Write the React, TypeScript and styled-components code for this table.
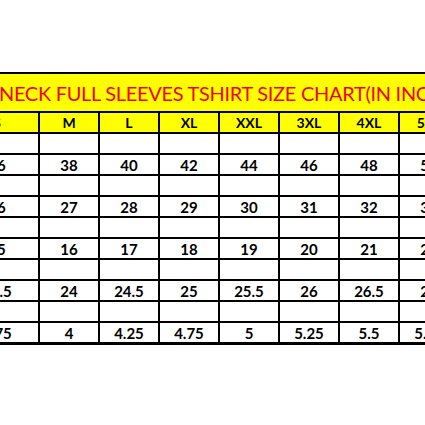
import React from 'react';
import styled, { createGlobalStyle } from 'styled-components';

const GlobalStyle = createGlobalStyle`
  html, body {
    margin: 0;
    padding: 0;
    background: #ffffff;
  }
  body {
    font-family: Lato, "Liberation Sans", sans-serif;
  }
`;

const SIZES = ['S', 'M', 'L', 'XL', 'XXL', '3XL', '4XL', '5XL'];

const MEASURES = [
    { label: 'CHEST', values: ['36', '38', '40', '42', '44', '46', '48', '50'] },
    { label: 'LENGTH', values: ['26', '27', '28', '29', '30', '31', '32', '33'] },
    { label: 'SHOULDER', values: ['15', '16', '17', '18', '19', '20', '21', '22'] },
    { label: 'SLEEVE', values: ['23.5', '24', '24.5', '25', '25.5', '26', '26.5', '27'] },
    { label: 'CUFF', values: ['3.75', '4', '4.25', '4.75', '5', '5.25', '5.5', '5.75'] },
];

// widths of the sheet columns; the label column and part of S lie left of the window
const LABEL_W = 34;
const FIRST_W = 84;
const COL_W = 60;

export default function App() {
    return (
        <>
            <GlobalStyle />
            <Viewport>
                <Sheet style={{ width: LABEL_W + FIRST_W + COL_W * (SIZES.length - 1) }}>
                    <colgroup>
                        <col style={{ width: LABEL_W }} />
                        <col style={{ width: FIRST_W }} />
                        {SIZES.slice(1).map((s) => (
                            <col key={s} style={{ width: COL_W }} />
                        ))}
                    </colgroup>
                    <thead>
                        <tr>
                            <Title colSpan={SIZES.length + 1}>ROUND NECK FULL SLEEVES TSHIRT SIZE CHART(IN INCHES)</Title>
                        </tr>
                        <tr>
                            <HeadCell>SIZE</HeadCell>
                            {SIZES.map((s) => (
                                <HeadCell key={s}>{s}</HeadCell>
                            ))}
                        </tr>
                    </thead>
                    <tbody>
                        {MEASURES.map((m) => (
                            <React.Fragment key={m.label}>
                                <tr>
                                    <LabelCell rowSpan={2}>{m.label}</LabelCell>
                                    {SIZES.map((s) => (
                                        <Cell key={s} />
                                    ))}
                                </tr>
                                <tr>
                                    {m.values.map((v, i) => (
                                        <Cell key={i}>{v}</Cell>
                                    ))}
                                </tr>
                            </React.Fragment>
                        ))}
                    </tbody>
                </Sheet>
            </Viewport>
        </>
    );
}

const Viewport = styled.div`
    width: 425px;
    height: 425px;
    overflow: hidden;
    padding-top: 72px;
    box-sizing: border-box;
`;

const Sheet = styled.table`
    margin-left: -${LABEL_W + 46}px;
    border-collapse: collapse;
    table-layout: fixed;
    border-bottom: 3px solid #000;
`;

const Title = styled.th`
    height: 37px;
    padding: 0;
    background: #ffff00;
    color: #f50000;
    font-size: 20px;
    font-weight: 400;
    letter-spacing: -0.3px;
    text-align: center;
    white-space: nowrap;
    border: 2px solid #000;
`;

const HeadCell = styled.th`
    height: 19px;
    padding: 0;
    background: #ffff00;
    color: #000;
    font-size: 14px;
    font-weight: 700;
    text-align: center;
    border: 2px solid #000;
`;

const Cell = styled.td`
    height: 19px;
    padding: 0;
    color: #000;
    font-size: 15px;
    font-weight: 700;
    text-align: center;
    border: 2px solid #000;
`;

const LabelCell = styled(Cell)`
    font-size: 9px;
    overflow: hidden;
    white-space: nowrap;
`;
